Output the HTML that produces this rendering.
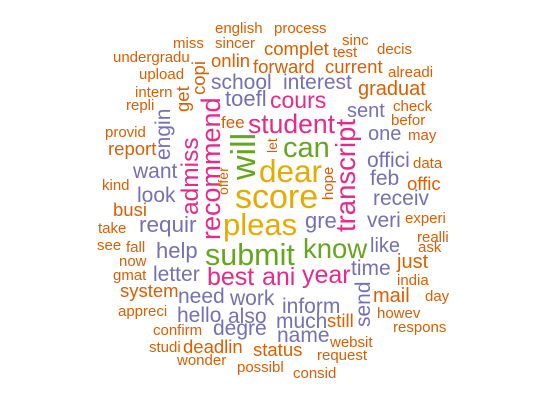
<!DOCTYPE html>
<html><head><meta charset="utf-8"><style>
html,body{margin:0;padding:0;background:#fff;width:555px;height:400px;overflow:hidden}
svg{display:block}
text{font-family:"Liberation Sans",Arial,sans-serif}
.o{fill:#d95f02;font-size:15px}
.m{fill:#d95f02;font-size:18.5px}
.p{fill:#7570b3;font-size:21px}
.k{fill:#e7298a}
.g{fill:#66a61e}
.y{fill:#e6ab02}
</style></head><body>
<svg width="555" height="400" xmlns="http://www.w3.org/2000/svg">
<text class="o" x="215" y="33">english</text>
<text class="o" x="274" y="33">process</text>
<text class="o" x="173" y="48">miss</text>
<text class="o" x="215" y="48">sincer</text>
<text class="o" x="342" y="45">sinc</text>
<text class="o" x="333" y="57">test</text>
<text class="o" x="377" y="54">decis</text>
<text class="m" x="264" y="55">complet</text>
<text class="o" x="113" y="62">undergradu</text>
<text class="m" x="211" y="67">onlin</text>
<text class="m" x="253" y="73">forward</text>
<text class="m" x="325" y="73">current</text>
<text class="o" x="388" y="77">alreadi</text>
<text class="o" x="139" y="79">upload</text>
<text class="m" transform="translate(205,95) rotate(-90)">copi</text>
<text class="p" x="211" y="89">school</text>
<text class="p" x="283" y="89">interest</text>
<text class="m" x="358" y="95" style="font-size:20px">graduat</text>
<text class="o" x="135" y="97">intern</text>
<text class="m" transform="translate(189,112) rotate(-90)">get</text>
<text class="p" x="225" y="106" style="font-size:22px">toefl</text>
<text class="k" x="270" y="108" style="font-size:23px">cours</text>
<text class="o" x="126" y="110">repli</text>
<text class="p" x="347" y="117" style="font-size:20px">sent</text>
<text class="o" x="393" y="111">check</text>
<text class="o" x="391" y="125">befor</text>
<text class="k" transform="translate(220,240) rotate(-90)" style="font-size:27px">recommend</text>
<text class="k" transform="translate(198,215) rotate(-90)" style="font-size:24.5px">admiss</text>
<text class="p" transform="translate(170,160) rotate(-90)">engin</text>
<text class="m" x="221" y="128" style="font-size:17px">fee</text>
<text class="k" x="248" y="133" style="font-size:26.5px">student</text>
<text class="o" x="105" y="137">provid</text>
<text class="p" x="368" y="140" style="font-size:20px">one</text>
<text class="o" x="408" y="140">may</text>
<text class="m" x="108" y="155">report</text>
<text class="m" transform="translate(277,153) rotate(-90)" style="font-size:14px">let</text>
<text class="g" transform="translate(255,180) rotate(-90)" style="font-size:34px">will</text>
<text class="g" x="283" y="157" style="font-size:29px">can</text>
<text class="k" transform="translate(355,232) rotate(-90)" style="font-size:27.5px">transcript</text>
<text class="p" x="367" y="167">offici</text>
<text class="o" x="413" y="168">data</text>
<text class="p" x="133" y="178">want</text>
<text class="y" x="259" y="182" style="font-size:31.5px">dear</text>
<text class="o" transform="translate(333,200) rotate(-90)">hope</text>
<text class="o" transform="translate(228,195) rotate(-90)" style="font-size:14px">offer</text>
<text class="p" x="370" y="185">feb</text>
<text class="m" x="407" y="190">offic</text>
<text class="o" x="102" y="190">kind</text>
<text class="p" x="137" y="202">look</text>
<text class="y" x="235" y="208" style="font-size:34px">score</text>
<text class="p" x="373" y="205">receiv</text>
<text class="m" x="113" y="216">busi</text>
<text class="o" x="98" y="233">take</text>
<text class="p" x="139" y="232" style="font-size:22.5px">requir</text>
<text class="y" x="223" y="235" style="font-size:31px">pleas</text>
<text class="p" x="305" y="228" style="font-size:22px">gre</text>
<text class="p" x="367" y="227">veri</text>
<text class="o" x="405" y="223">experi</text>
<text class="o" x="417" y="242">realli</text>
<text class="o" x="97" y="250">see</text>
<text class="o" x="126" y="252">fall</text>
<text class="p" x="156" y="258" style="font-size:22px">help</text>
<text class="g" x="303" y="258" style="font-size:27.5px">know</text>
<text class="p" x="370" y="252" style="font-size:20px">like</text>
<text class="o" x="418" y="252">ask</text>
<text class="g" x="205" y="265" style="font-size:30.5px">submit</text>
<text class="o" x="119" y="266">now</text>
<text class="p" x="351" y="275">time</text>
<text class="m" x="397" y="268" style="font-size:20px">just</text>
<text class="o" x="113" y="280">gmat</text>
<text class="p" x="153" y="281">letter</text>
<text class="k" x="207" y="285" style="font-size:25px">best</text>
<text class="k" x="262" y="285" style="font-size:25px">ani</text>
<text class="k" x="302" y="283" style="font-size:25px">year</text>
<text class="o" x="397" y="285">india</text>
<text class="p" transform="translate(370,327) rotate(-90)">send</text>
<text class="m" x="120" y="297">system</text>
<text class="m" x="373" y="302" style="font-size:20px">mail</text>
<text class="o" x="425" y="301">day</text>
<text class="p" x="178" y="303">need</text>
<text class="p" x="230" y="305">work</text>
<text class="p" x="282" y="313">inform</text>
<text class="o" x="118" y="316">appreci</text>
<text class="p" x="177" y="322">hello</text>
<text class="p" x="228" y="323">also</text>
<text class="o" x="377" y="318">howev</text>
<text class="p" x="276" y="328">much</text>
<text class="m" x="327" y="327">still</text>
<text class="o" x="393" y="332">respons</text>
<text class="o" x="153" y="335">confirm</text>
<text class="p" x="213" y="335">degre</text>
<text class="p" x="277" y="342">name</text>
<text class="o" x="330" y="347">websit</text>
<text class="o" x="149" y="352">studi</text>
<text class="m" x="183" y="353">deadlin</text>
<text class="m" x="253" y="356">status</text>
<text class="o" x="317" y="360">request</text>
<text class="o" x="177" y="365">wonder</text>
<text class="o" x="237" y="372">possibl</text>
<text class="o" x="293" y="378">consid</text>
</svg>
</body></html>
